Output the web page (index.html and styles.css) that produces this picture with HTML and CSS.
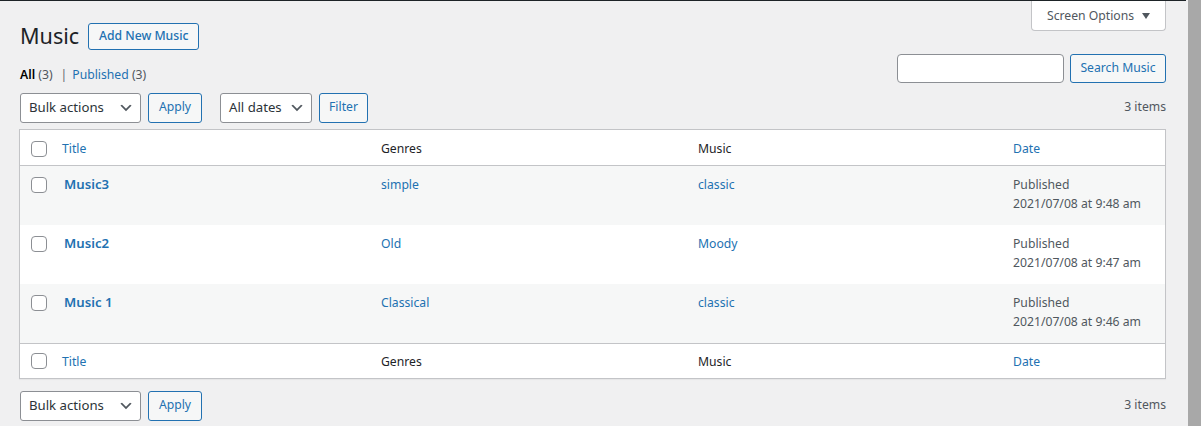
FILE: index.html
```html
<!DOCTYPE html>
<html lang="en">
<head>
<meta charset="utf-8">
<title>Music</title>
<link rel="stylesheet" href="styles.css">
</head>
<body>
<div class="frame">
  <div class="page">
    <div class="topline"></div>
    <div class="top-row">
      <div class="title-block">
        <h1 class="page-title">Music</h1>
        <a class="btn btn-add" href="#">Add New Music</a>
      </div>
      <button class="screen-options">Screen Options <span class="tri"></span></button>
    </div>
    <div class="filters-row">
      <ul class="subsubsub">
        <li><a class="current" href="#">All</a> <span class="count">(3)</span><span class="sep">|</span></li>
        <li><a href="#">Published</a> <span class="count">(3)</span></li>
      </ul>
      <div class="search-box">
        <input class="search-input" type="text">
        <button class="btn">Search Music</button>
      </div>
    </div>

    <div class="tablenav tablenav-top">
      <div class="actions">
        <div class="select w-bulk"><span>Bulk actions</span><svg viewBox="0 0 20 20" class="chev"><path d="M5 6l5 5 5-5 2 1-7 7-7-7 2-1z"/></svg></div>
        <button class="btn btn-apply">Apply</button>
      </div>
      <div class="actions">
        <div class="select w-dates"><span>All dates</span><svg viewBox="0 0 20 20" class="chev"><path d="M5 6l5 5 5-5 2 1-7 7-7-7 2-1z"/></svg></div>
        <button class="btn btn-filter">Filter</button>
      </div>
      <div class="displaying-num">3 items</div>
    </div>

    <table class="list-table">
      <colgroup>
        <col class="c-cb"><col class="c-title"><col class="c-genres"><col class="c-music"><col class="c-date">
      </colgroup>
      <thead>
        <tr>
          <th class="cb"><span class="checkbox"></span></th>
          <th><a href="#">Title</a></th>
          <th>Genres</th>
          <th>Music</th>
          <th><a href="#">Date</a></th>
        </tr>
      </thead>
      <tbody>
        <tr class="alt">
          <td class="cb"><span class="checkbox"></span></td>
          <td><a class="row-title" href="#">Music3</a></td>
          <td><a href="#">simple</a></td>
          <td><a href="#">classic</a></td>
          <td class="date">Published<br>2021/07/08 at 9:48 am</td>
        </tr>
        <tr>
          <td class="cb"><span class="checkbox"></span></td>
          <td><a class="row-title" href="#">Music2</a></td>
          <td><a href="#">Old</a></td>
          <td><a href="#">Moody</a></td>
          <td class="date">Published<br>2021/07/08 at 9:47 am</td>
        </tr>
        <tr class="alt">
          <td class="cb"><span class="checkbox"></span></td>
          <td><a class="row-title" href="#">Music 1</a></td>
          <td><a href="#">Classical</a></td>
          <td><a href="#">classic</a></td>
          <td class="date">Published<br>2021/07/08 at 9:46 am</td>
        </tr>
      </tbody>
      <tfoot>
        <tr>
          <th class="cb"><span class="checkbox"></span></th>
          <th><a href="#">Title</a></th>
          <th>Genres</th>
          <th>Music</th>
          <th><a href="#">Date</a></th>
        </tr>
      </tfoot>
    </table>

    <div class="tablenav tablenav-bottom">
      <div class="actions">
        <div class="select w-bulk"><span>Bulk actions</span><svg viewBox="0 0 20 20" class="chev"><path d="M5 6l5 5 5-5 2 1-7 7-7-7 2-1z"/></svg></div>
        <button class="btn btn-apply">Apply</button>
      </div>
      <div class="displaying-num">3 items</div>
    </div>
  </div>
  <div class="scrollbar"></div>
</div>
</body>
</html>
```

FILE: styles.css
```css
* { box-sizing: border-box; }
html, body { margin: 0; padding: 0; }
body {
  background: #f0f0f1;
  font-family: "Noto Sans", "Open Sans", sans-serif;
  font-size: 12.2px;
  line-height: 1.5;
  color: #3c434a;
  overflow: hidden;
}
a { color: #2271b1; text-decoration: none; }

.frame { display: flex; height: 426px; }
.page { width: 1188px; padding: 0 22px 0 20px; }
.topline { height: 1px; background: #1d2327; margin: 0 -20px 0 -20px; }
.scrollbar { width: 13px; background: #a8a8a8; }

.top-row { display: flex; justify-content: space-between; align-items: flex-start; }
.title-block { display: flex; align-items: center; gap: 9px; padding-top: 20px; }
.page-title {
  margin: 0; font-size: 21.6px; font-weight: 400; line-height: 29px; color: #1d2327;
}
.btn {
  display: inline-flex; align-items: center; justify-content: center;
  font-family: inherit; font-size: 12.2px; line-height: 1;
  color: #2271b1; background: #f6f7f7;
  border: 1px solid #2271b1; border-radius: 3px;
  padding: 0 10px; height: 30px; cursor: pointer;
}
.btn-add { height: 27px; width: 111px; padding: 0; font-weight: 500; margin-top: 2px; }

.screen-options {
  font-family: inherit; font-size: 12.2px; color: #50575e;
  background: #fff; border: 1px solid #c3c4c7; border-top: none;
  border-radius: 0 0 4px 4px; height: 30px; width: 135px;
  padding: 0 0 0 15px; display: flex; align-items: center; gap: 8px;
  justify-content: flex-start;
}
.tri {
  width: 0; height: 0; border-left: 4px solid transparent; border-right: 4px solid transparent;
  border-top: 6px solid #50575e; margin-top: 1px;
}

.filters-row { display: flex; justify-content: space-between; align-items: flex-start; margin-top: 4px; }
.subsubsub { list-style: none; margin: 0; padding: 11px 0 0; display: flex; gap: 0; line-height: 19.5px; color: #646970; }
.subsubsub li { margin: 0; }
.subsubsub a.current { color: #000; font-weight: 600; }
.subsubsub .count { color: #50575e; }
.subsubsub .sep { color: #646970; margin: 0 5px 0 8px; }
.search-box { display: flex; gap: 6px; }
.search-input {
  width: 167px; height: 29px; border: 1px solid #8c8f94; border-radius: 4px; background: #fff;
  font-family: inherit;
}
.search-box .btn { height: 29px; width: 96px; padding: 0; }

.tablenav { display: flex; align-items: center; height: 30px; margin-top: 8px; }
.tablenav .actions { display: flex; gap: 7px; margin-right: 18px; }
.displaying-num { margin-left: auto; color: #50575e; }
.select {
  height: 30px; border: 1px solid #8c8f94; border-radius: 3px; background: #fff;
  display: flex; align-items: center; justify-content: space-between;
  padding: 0 6px 0 8px; font-size: 13.2px; color: #2c3338;
}
.w-bulk { width: 121px; }
.w-dates { width: 92px; }
.chev { width: 16px; height: 16px; fill: #50575e; margin-top: 1px; }
.btn-apply { width: 54px; padding: 0; }
.btn-filter { width: 49px; padding: 0; }

.list-table {
  margin: 6px 0 0 -1px; width: 1147px; table-layout: fixed;
  border-collapse: separate; border-spacing: 0;
  border: 1px solid #c3c4c7; background: #fff;
  box-shadow: 0 1px 1px rgba(0,0,0,0.04);
}
.c-cb { width: 32px; }
.c-title { width: 319px; }
.c-genres { width: 317px; }
.c-music { width: 315px; }
.c-date { width: 162px; }
.list-table th, .list-table td {
  text-align: left; font-weight: 400; vertical-align: top;
  padding: 9px 10px 0; line-height: 19.5px; color: #1d2327;
}
.list-table thead th { border-bottom: 1px solid #c3c4c7; height: 36px; }
.list-table tfoot th { border-top: 1px solid #c3c4c7; height: 35px; padding-top: 8px; }
.list-table tbody td { height: 59px; color: #50575e; }
.list-table tbody tr.alt td { background: #f6f7f7; }
.list-table .cb { padding: 11px 0 0 11px; }
.list-table tfoot .cb { padding-top: 9px; }
.checkbox {
  display: block; width: 16px; height: 16px; border: 1px solid #8c8f94; border-radius: 4px; background: #fff;
}
.row-title { font-weight: 600; font-size: 13.2px; margin-left: 2px; }
.list-table td.date { color: #50575e; }
.tablenav-bottom { margin-top: 12px; }
```
